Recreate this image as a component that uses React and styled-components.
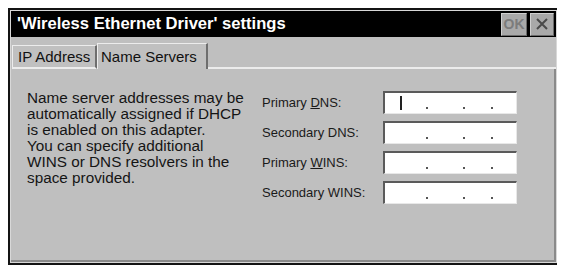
import React from "react";
import styled, { createGlobalStyle } from "styled-components";

const Global = createGlobalStyle`
  html, body { background: #ffffff; }
  body { margin: 8px; font-family: "Liberation Sans", Arial, sans-serif; }
`;

const Window = styled.div`
  box-sizing: border-box;
  width: 551px;
  height: 257px;
  border: 2px solid #141414;
  padding: 1px;
  background: #bfbfbf;
  display: flex;
  flex-direction: column;
  box-shadow: inset 0 0 0 1px #d8d8d8;
`;

const TitleBar = styled.div`
  height: 26px;
  background: #000;
  display: flex;
  align-items: center;
  padding: 0 2px 0 6px;
  flex-shrink: 0;
`;

const Title = styled.div`
  flex: 1;
  color: #fff;
  font-weight: bold;
  font-size: 16.6px;
`;

const TitleButton = styled.div`
  box-sizing: border-box;
  width: ${(p) => p.$w}px;
  height: 23px;
  margin-left: 3px;
  background: #a9a9a9;
  border-top: 1px solid #d0d0d0;
  border-left: 1px solid #d0d0d0;
  border-bottom: 1px solid #6a6a6a;
  border-right: 1px solid #6a6a6a;
  display: flex;
  align-items: center;
  justify-content: center;
  color: ${(p) => p.$color};
  font-size: 14px;
  font-weight: bold;
`;

const TabBar = styled.div`
  height: 32px;
  display: flex;
  align-items: flex-end;
  flex-shrink: 0;
  padding-left: 1px;
`;

const Tab = styled.div`
  box-sizing: border-box;
  width: ${(p) => p.$w}px;
  height: ${(p) => (p.$active ? 26 : 24)}px;
  padding-left: ${(p) => (p.$active ? 3 : 5)}px;
  display: flex;
  align-items: center;
  font-size: 15px;
  color: #111;
  border-top: 1px solid #ececec;
  border-left: 1px solid #ececec;
  border-right: 2px solid #6e6e6e;
  border-bottom: ${(p) => (p.$active ? "none" : "2px solid #ececec")};
  background: #c0c0c0;
`;

const TabFiller = styled.div`
  flex: 1;
  border-bottom: 2px solid #ececec;
`;

const Panel = styled.div`
  flex: 1;
  display: flex;
  padding: 21px 0 0 16px;
  border-right: 2px solid #8a8a8a;
  border-bottom: 2px solid #8a8a8a;
`;

const Description = styled.div`
  width: 235px;
  font-size: 15.3px;
  line-height: 16px;
  color: #151515;
`;

const Fields = styled.div`
  display: flex;
  flex-direction: column;
  gap: 7px;
  padding-top: 1px;
`;

const FieldRow = styled.div`
  display: flex;
  align-items: center;
  height: 23px;
`;

const Label = styled.div`
  width: 121px;
  font-size: 13px;
  color: #1a1a1a;
`;

const IpBox = styled.div`
  box-sizing: border-box;
  width: 134px;
  height: 23px;
  background: #fff;
  border-top: 2px solid #5a5a5a;
  border-left: 2px solid #5a5a5a;
  border-right: 1px solid #e8e8e8;
  border-bottom: 1px solid #e8e8e8;
  position: relative;
`;

const Dot = styled.span`
  position: absolute;
  bottom: 4px;
  width: 2px;
  height: 2px;
  background: #555;
`;

const Caret = styled.span`
  position: absolute;
  left: 15px;
  top: 3px;
  width: 2px;
  height: 14px;
  background: #222;
`;

const fields = [
  { pre: "Primary ", key: "D", post: "NS:", caret: true },
  { pre: "Secondary DNS:" },
  { pre: "Primary ", key: "W", post: "INS:" },
  { pre: "Secondary WINS:" },
];

export default function App() {
  return (
    <>
      <Global />
      <Window>
        <TitleBar>
          <Title>'Wireless Ethernet Driver' settings</Title>
          <TitleButton $w={26} $color="#7c7c7c">OK</TitleButton>
          <TitleButton $w={24} $color="#4a4a4a">
            <svg width="12" height="12" viewBox="0 0 12 12">
              <path d="M1 1 L11 11 M11 1 L1 11" stroke="#4a4a4a" strokeWidth="2" />
            </svg>
          </TitleButton>
        </TitleBar>
        <TabBar>
          <Tab $w={85}>IP Address</Tab>
          <Tab $w={111} $active>Name Servers</Tab>
          <TabFiller />
        </TabBar>
        <Panel>
          <Description>
            Name server addresses may be
            <br />
            automatically assigned if DHCP
            <br />
            is enabled on this adapter.
            <br />
            You can specify additional
            <br />
            WINS or DNS resolvers in the
            <br />
            space provided.
          </Description>
          <Fields>
            {fields.map((f, i) => (
              <FieldRow key={i}>
                <Label>
                  {f.pre}
                  {f.key && <u>{f.key}</u>}
                  {f.post}
                </Label>
                <IpBox>
                  {f.caret && <Caret />}
                  <Dot style={{ left: 41 }} />
                  <Dot style={{ left: 78 }} />
                  <Dot style={{ left: 106 }} />
                </IpBox>
              </FieldRow>
            ))}
          </Fields>
        </Panel>
      </Window>
    </>
  );
}
